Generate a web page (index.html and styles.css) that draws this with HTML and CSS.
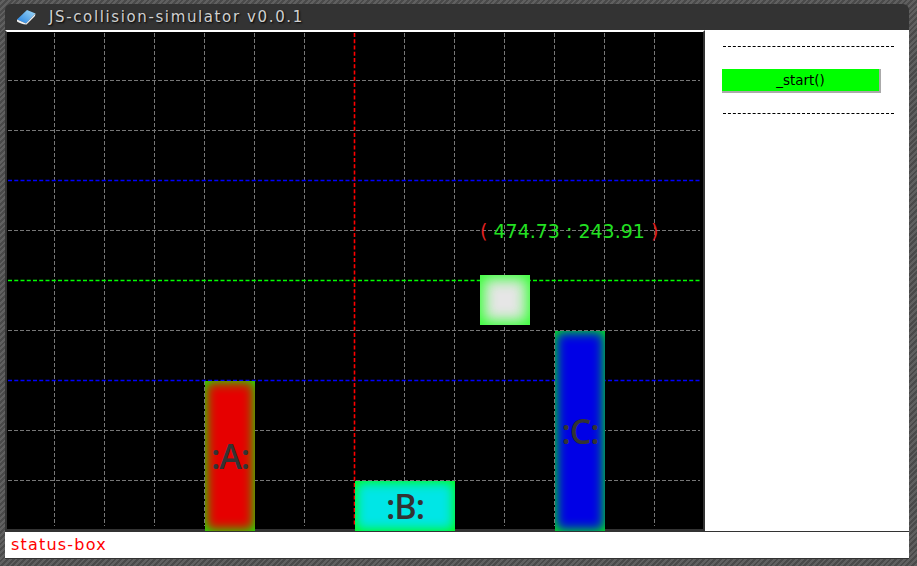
FILE: index.html
```html
<!DOCTYPE html>
<html lang="en">
  <head>
    <meta charset="UTF-8" />
    <title>JS-collision-simulator v0.0.1</title>
    <link rel="stylesheet" href="styles.css">
  </head>
  <body>
    <div class="window">
      <div class="titlebar">
        <svg class="book" width="20" height="16" viewBox="0 0 20 16">
          <defs>
            <linearGradient id="cover" x1="0" y1="1" x2="1" y2="0">
              <stop offset="0" stop-color="#1f7fe0" />
              <stop offset="1" stop-color="#a5dcf8" />
            </linearGradient>
          </defs>
          <path d="M1 10.5 L11 1 L19.5 4.5 L10 14.5 Z" fill="url(#cover)" />
          <path d="M1 10.5 L10 14.5 L19.5 4.5 L19 7 L10.5 15.5 C7 15.5 3 14 1 12.5 Z" fill="#f2f2f2" />
        </svg>
        <span class="title">JS-collision-simulator v0.0.1</span>
      </div>

      <div class="main">
        <div class="stage">
          <svg class="grid" width="696" height="497" viewBox="0 0 696 497">
            <g class="lines">
              <path d="M47.5 1V494M97.5 1V494M147.5 1V494M197.5 1V494M247.5 1V494M297.5 1V494M397.5 1V494M447.5 1V494M497.5 1V494M547.5 1V494M597.5 1V494M647.5 1V494" />
              <path d="M1 48.5H693M1 98.5H693M1 198.5H693M1 298.5H693M1 398.5H693M1 448.5H693" />
            </g>
            <path class="line-blue" d="M1 148.5H693M1 348.5H693" />
            <path class="line-green" d="M1 248.5H693" />
            <path class="line-red" d="M347.5 1V494" />
          </svg>

          <div class="coords"><span class="paren">(</span> 474.73 : 243.91 <span class="paren">)</span></div>
          <div class="ball"></div>
          <div class="block block-a"><span>:A:</span></div>
          <div class="block block-b"><span>:B:</span></div>
          <div class="block block-c"><span>:C:</span></div>
        </div>

        <div class="sidebar">
          <hr />
          <button class="start-btn">_start()</button>
          <hr />
        </div>
      </div>

      <div class="status-box">status-box</div>
    </div>
  </body>
</html>
```

FILE: styles.css
```css
* {
  margin: 0;
  padding: 0;
  box-sizing: border-box;
}

body {
  width: 917px;
  height: 566px;
  overflow: hidden;
  padding: 4px 8px 7px 5px;
  background: repeating-linear-gradient(135deg, #4a4a4a 0, #4a4a4a 2px, #606060 2px, #606060 4px);
  font-family: "DejaVu Sans", sans-serif;
}

.window {
  width: 904px;
  height: 555px;
  display: flex;
  flex-direction: column;
  background: #333;
  border-radius: 6px 6px 0 0;
}

/* Title bar */
.titlebar {
  height: 26px;
  display: flex;
  align-items: center;
  padding-left: 11px;
  flex-shrink: 0;
}

.book {
  flex-shrink: 0;
}

.title {
  margin-left: 13px;
  color: #d0d0d0;
  font-size: 15px;
  letter-spacing: 1.62px;
  text-shadow: 1px 1px 2px #000;
}

/* Canvas + sidebar */
.main {
  display: flex;
  height: 502px;
  flex-shrink: 0;
}

.stage {
  position: relative;
  width: 700px;
  height: 502px;
  background: #000;
  border-top: 2px solid #fff;
  border-left: 2px solid #333;
  border-right: 2px solid #333;
  border-bottom: 3px solid #333;
}

.grid {
  display: block;
  fill: none;
}

.lines {
  stroke: #777;
  stroke-dasharray: 4 2;
}

.line-blue {
  stroke: #00f;
  stroke-width: 1.6;
  stroke-dasharray: 4 2.25;
}

.line-green {
  stroke: #0f0;
  stroke-width: 1.6;
  stroke-dasharray: 4 2.25;
}

.line-red {
  stroke: #f00;
  stroke-width: 1.6;
  stroke-dasharray: 4 2.25;
}

.coords {
  position: absolute;
  left: 473px;
  top: 187px;
  color: #22e022;
  font-size: 19px;
  line-height: 24px;
  white-space: pre;
}

.paren {
  color: #e02020;
}

.ball {
  position: absolute;
  left: 473px;
  top: 243px;
  width: 50px;
  height: 50px;
  background: #e6e6e6;
  box-shadow: inset 0 0 14px 4px #3f3;
}

.block {
  position: absolute;
  display: flex;
  align-items: center;
  justify-content: center;
  color: #333;
  font-family: "Open Sans", sans-serif;
  font-weight: 600;
  font-size: 34px;
  letter-spacing: -1px;
  line-height: 30px;
  box-shadow: inset 0 0 12px 1px #0f0;
}

.block-a {
  left: 198px;
  top: 349px;
  width: 50px;
  height: 150px;
  background: #e60000;
}

.block-b {
  left: 348px;
  top: 449px;
  width: 100px;
  height: 50px;
  background: #00e6e6;
}

.block-c {
  left: 548px;
  top: 299px;
  width: 50px;
  height: 200px;
  background: #0000e6;
}

.sidebar {
  width: 204px;
  height: 501px;
  background: #fff;
  padding: 16px 15px 0 18px;
}

.sidebar hr {
  border: 0;
  border-top: 1px dashed #000;
  height: 0;
}

.start-btn {
  display: block;
  width: 159px;
  height: 24px;
  margin: 22px 0 20px -1px;
  background: #0f0;
  border: 1px solid;
  border-color: #0f0 #aaa #aaa #0f0;
  border-width: 0 2px 2px 0;
  color: #000;
  font-family: "DejaVu Sans", sans-serif;
  font-size: 13.5px;
}

/* Status line */
.status-box {
  height: 26px;
  flex-shrink: 0;
  background: #fff;
  color: #f00;
  font-size: 16px;
  line-height: 26px;
  padding-left: 6px;
  letter-spacing: 1.2px;
}
```
